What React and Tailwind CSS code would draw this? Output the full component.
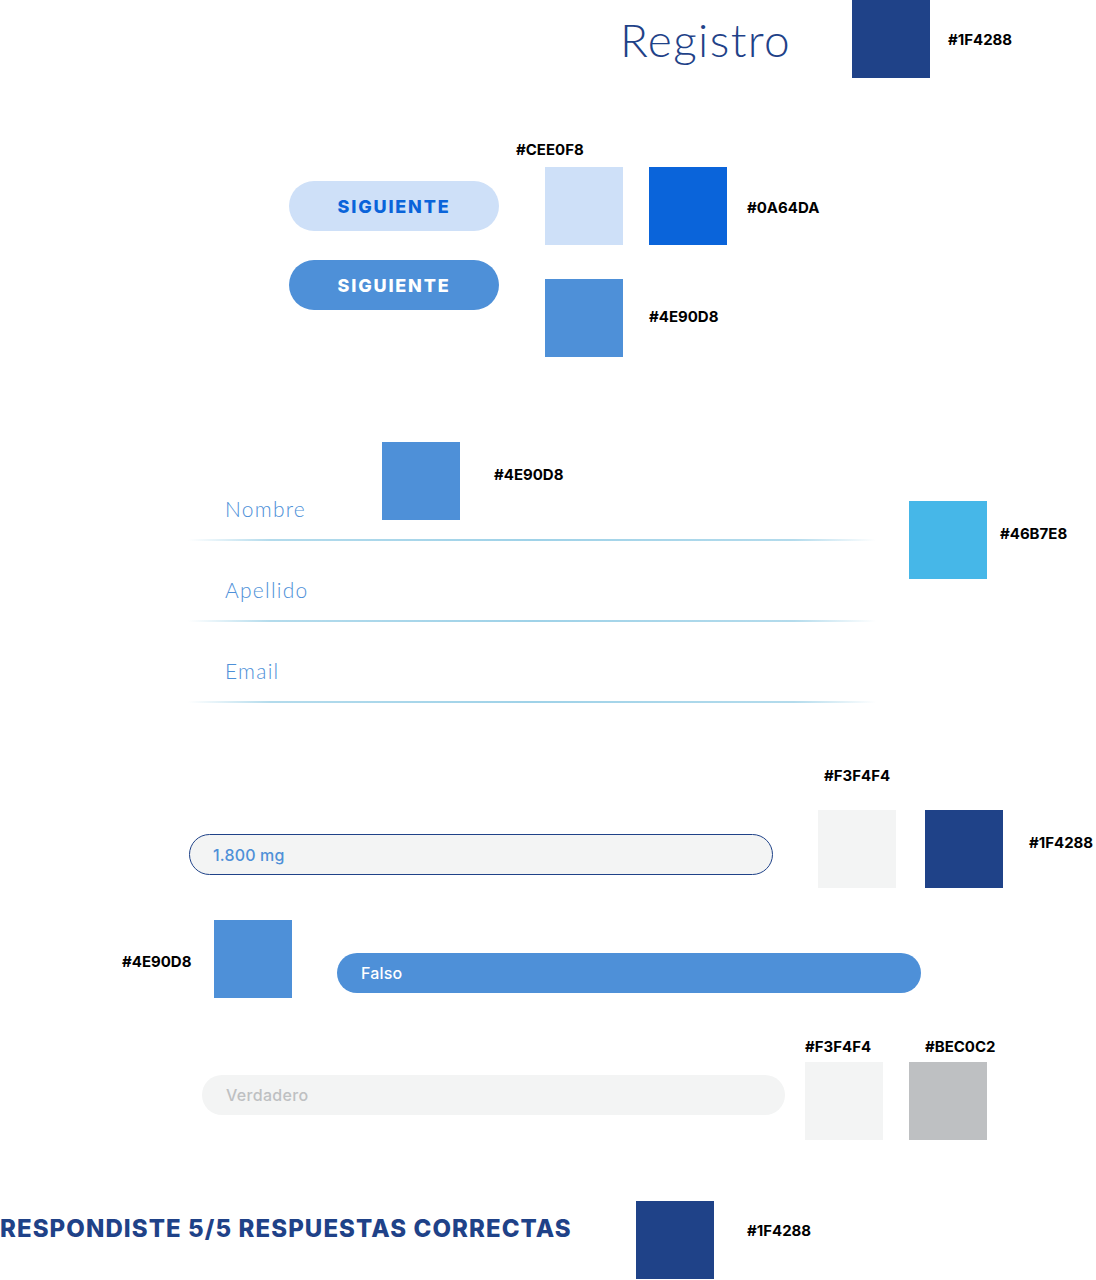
import React from "react";

const Hex = ({ children, className = "" }) => (
  <div
    className={`h-[20px] whitespace-nowrap font-['Inter'] text-[15px] font-bold leading-[20px] text-black ${className}`}
  >
    {children}
  </div>
);

const Swatch = ({ color, className = "" }) => (
  <div className={`h-[78px] w-[78px] shrink-0 ${color} ${className}`} />
);

const Line = () => (
  <div className="h-[2px] w-full bg-[linear-gradient(90deg,rgba(180,220,238,0),#b3dbec_12%,#9fd2e8_50%,#b3dbec_88%,rgba(180,220,238,0))]" />
);

const Field = ({ label, first }) => (
  <div className={`flex flex-col ${first ? "h-[99px]" : "h-[81px]"}`}>
    {first ? (
      <div className="flex flex-1 items-start">
        <div className="ml-[37px] mt-[55px] w-[157px] font-['Lato'] text-[21px] font-light leading-[24px] tracking-[0.06em] text-[#4E90D8]">
          {label}
        </div>
        <Swatch color="bg-[#4E90D8]" />
        <Hex className="ml-[34px] mt-[23px]">#4E90D8</Hex>
      </div>
    ) : (
      <div className="flex-1">
        <div className="ml-[37px] mt-[37px] font-['Lato'] text-[21px] font-light leading-[24px] tracking-[0.06em] text-[#4E90D8]">
          {label}
        </div>
      </div>
    )}
    <Line />
  </div>
);

export default function App() {
  return (
    <div className="flex h-[1280px] w-[1096px] flex-col overflow-hidden bg-white">
      {/* titulo */}
      <section className="flex h-[78px] shrink-0 items-start">
        <div className="ml-[620px] mt-[17px] w-[232px] font-['Lato'] text-[46px] font-light leading-none tracking-[0.03em] text-[#1F4288]">
          Registro
        </div>
        <Swatch color="bg-[#1F4288]" />
        <Hex className="ml-[18px] mt-[30px]">#1F4288</Hex>
      </section>

      {/* botones */}
      <section className="mt-[62px] flex h-[217px] shrink-0 items-start">
        <div className="ml-[289px] mt-[41px] flex w-[210px] flex-col gap-[29px]">
          <button className="flex h-[50px] items-center justify-center rounded-full bg-[#CEE0F8] font-['Inter'] text-[18px] font-extrabold tracking-[0.1em] text-[#0A64DA]">
            SIGUIENTE
          </button>
          <button className="flex h-[50px] items-center justify-center rounded-full bg-[#4E90D8] font-['Inter'] text-[18px] font-extrabold tracking-[0.1em] text-white">
            SIGUIENTE
          </button>
        </div>
        <div className="ml-[46px] flex w-[78px] flex-col">
          <Hex className="-ml-[29px]">#CEE0F8</Hex>
          <Swatch color="bg-[#CEE0F8]" className="mt-[7px]" />
          <Swatch color="bg-[#4E90D8]" className="mt-[34px]" />
        </div>
        <div className="ml-[26px] mt-[27px] flex w-[78px] flex-col">
          <Swatch color="bg-[#0A64DA]" />
          <Hex className="mt-[62px]">#4E90D8</Hex>
        </div>
        <Hex className="ml-[20px] mt-[58px]">#0A64DA</Hex>
      </section>

      {/* formulario */}
      <section className="mt-[85px] flex h-[261px] shrink-0 items-start">
        <div className="ml-[188px] flex w-[688px] flex-col">
          <Field label="Nombre" first />
          <Field label="Apellido" />
          <Field label="Email" />
        </div>
        <div className="ml-[33px] mt-[59px] flex items-start">
          <Swatch color="bg-[#46B7E8]" />
          <Hex className="ml-[13px] mt-[23px]">#46B7E8</Hex>
        </div>
      </section>

      {/* campo con borde */}
      <section className="mt-[63px] flex h-[122px] shrink-0 items-start">
        <div className="ml-[189px] mt-[68px] flex h-[41px] w-[584px] items-center rounded-full border border-[#1F4288] bg-[#F3F4F4] pl-[23px] font-['Inter'] text-[16px] font-medium tracking-[0.01em] text-[#4E90D8]">
          1.800 mg
        </div>
        <div className="ml-[45px] flex w-[78px] flex-col">
          <Hex className="ml-[6px]">#F3F4F4</Hex>
          <Swatch color="bg-[#F3F4F4]" className="mt-[24px]" />
        </div>
        <Swatch color="bg-[#1F4288]" className="ml-[29px] mt-[44px]" />
        <Hex className="ml-[26px] mt-[67px]">#1F4288</Hex>
      </section>

      {/* falso */}
      <section className="mt-[32px] flex h-[78px] shrink-0 items-start">
        <Hex className="ml-[122px] mt-[32px] w-[92px]">#4E90D8</Hex>
        <Swatch color="bg-[#4E90D8]" />
        <div className="ml-[45px] mt-[33px] flex h-[40px] w-[584px] items-center rounded-full bg-[#4E90D8] pl-[24px] font-['Inter'] text-[16px] font-medium tracking-[0.01em] text-white">
          Falso
        </div>
      </section>

      {/* verdadero */}
      <section className="mt-[39px] flex h-[103px] shrink-0 items-start">
        <div className="ml-[202px] mt-[38px] flex h-[40px] w-[583px] items-center rounded-full bg-[#F3F4F4] pl-[24px] font-['Inter'] text-[16px] font-medium tracking-[0.02em] text-[#BEC0C2]">
          Verdadero
        </div>
        <div className="ml-[20px] flex w-[78px] flex-col">
          <Hex>#F3F4F4</Hex>
          <Swatch color="bg-[#F3F4F4]" className="mt-[5px]" />
        </div>
        <div className="ml-[26px] flex w-[78px] flex-col">
          <Hex className="ml-[16px]">#BEC0C2</Hex>
          <Swatch color="bg-[#BEC0C2]" className="mt-[5px]" />
        </div>
      </section>

      {/* resultado */}
      <section className="mt-[61px] flex h-[79px] shrink-0 items-start">
        <div className="mt-[14px] w-[636px] whitespace-nowrap font-['Inter'] text-[24px] font-extrabold leading-[28px] tracking-[0.045em] text-[#1F4288]">
          RESPONDISTE 5/5 RESPUESTAS CORRECTAS
        </div>
        <Swatch color="bg-[#1F4288]" />
        <Hex className="ml-[33px] mt-[20px]">#1F4288</Hex>
      </section>
    </div>
  );
}
